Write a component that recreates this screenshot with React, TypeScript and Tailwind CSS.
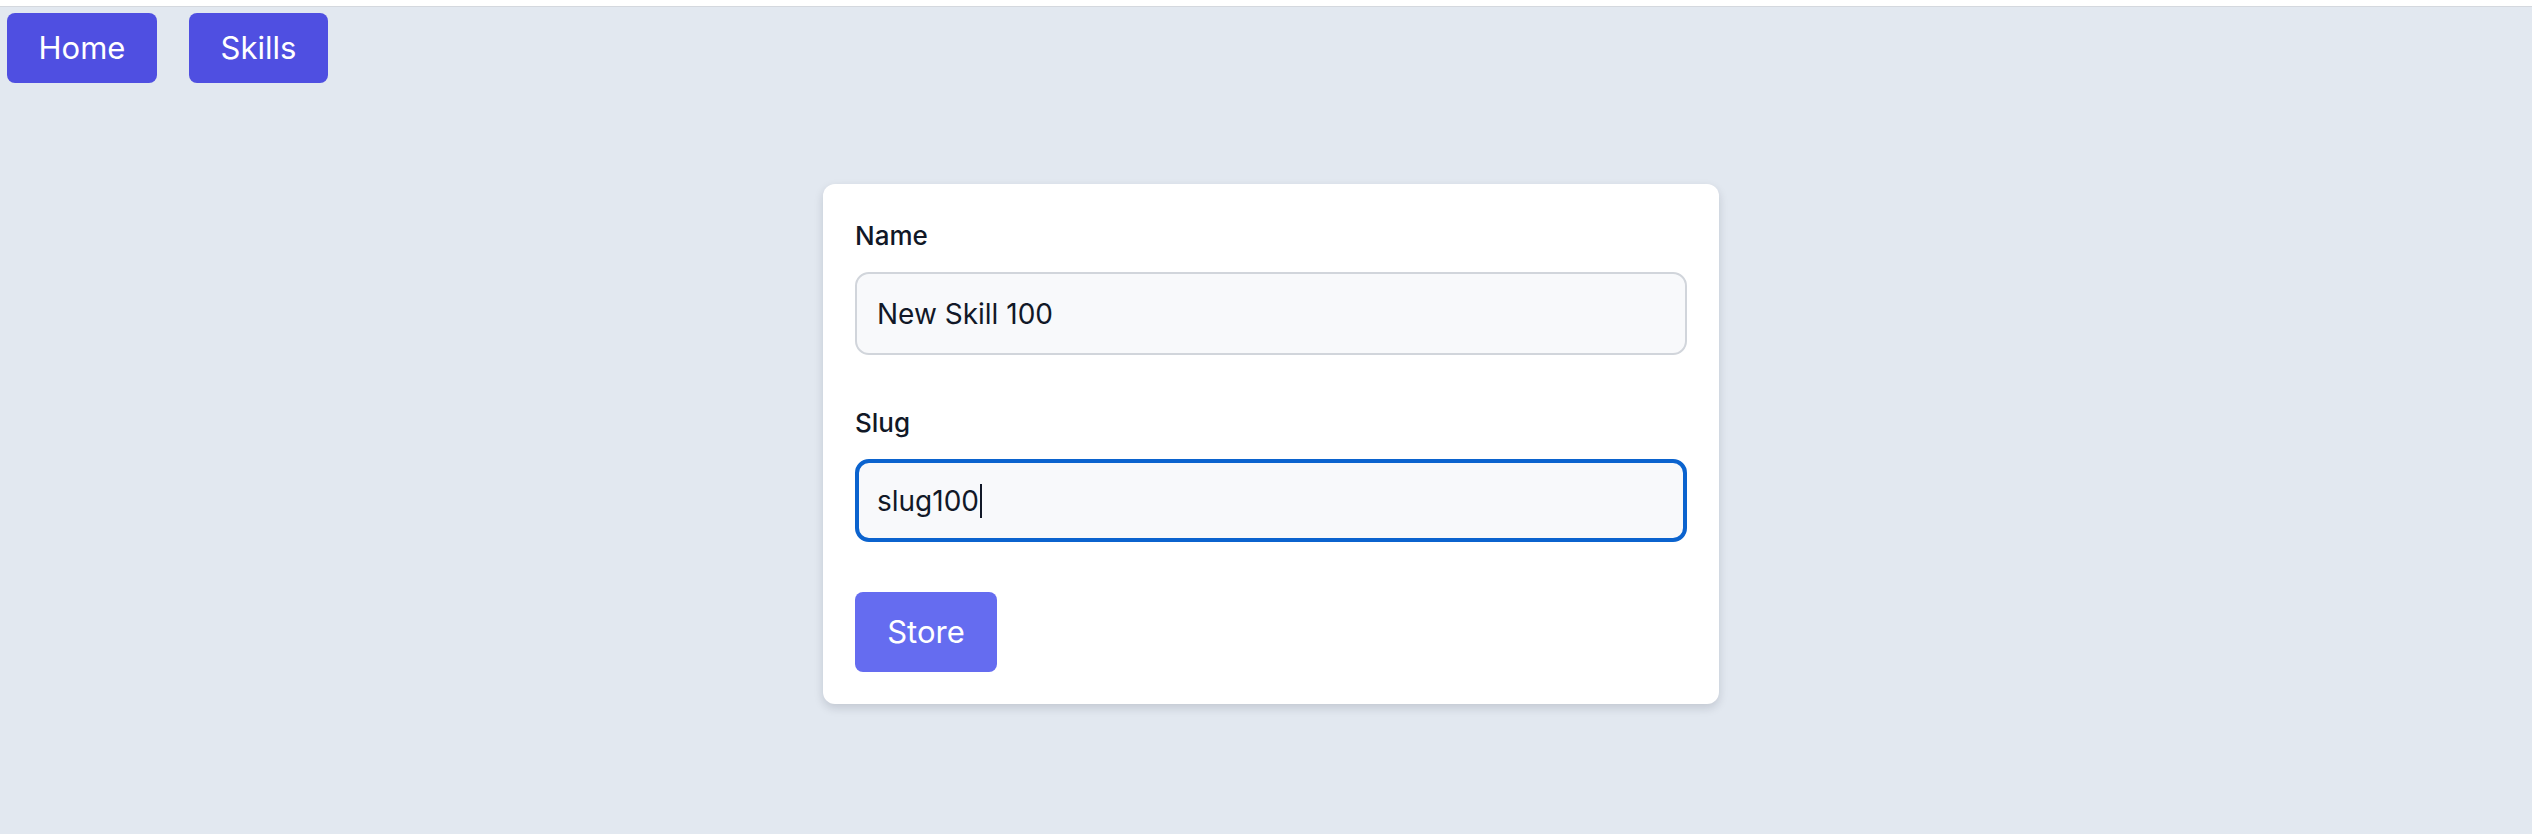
export default function App() {
  return (
    <div className="min-h-[834px] bg-[#e2e8f0] font-['Inter',sans-serif]">
      <div className="h-[7px] border-b border-[#d4d8de] bg-white" />
      <nav className="flex gap-[32px] pl-[7px] pt-[6px]">
        <a className="flex h-[70px] w-[150px] items-center justify-center rounded-[8px] bg-[#4f4fe1] text-[31px] text-white">
          Home
        </a>
        <a className="flex h-[70px] w-[139px] items-center justify-center rounded-[8px] bg-[#4f4fe1] text-[31px] text-white">
          Skills
        </a>
      </nav>

      <div className="flex justify-center pl-[10px] pt-[101px]">
        <form className="w-[896px] rounded-[12px] bg-white p-[32px] shadow-[0_4px_10px_rgba(15,23,42,0.15)]">
          <label className="block text-[26px] font-medium leading-[40px] text-[#111827]">Name</label>
          <input
            readOnly
            value="New Skill 100"
            className="mt-[16px] block h-[83px] w-full rounded-[14px] border-2 border-[#d1d5db] bg-[#f8f9fb] pl-[20px] text-[28px] text-[#111827] outline-none"
          />

          <label className="mt-[48px] block text-[26px] font-medium leading-[40px] text-[#111827]">Slug</label>
          <div className="mt-[16px] flex h-[83px] w-full items-center rounded-[14px] border-[4px] border-[#0b63ce] bg-[#f8f9fb] pl-[18px] text-[28px] text-[#111827]">
            <span>slug100</span>
            <span className="ml-[1px] inline-block h-[34px] w-[2px] bg-[#111827]" />
          </div>

          <button
            type="button"
            className="mt-[50px] flex h-[80px] w-[142px] items-center justify-center rounded-[8px] bg-[#656cf0] text-[31px] text-white"
          >
            Store
          </button>
        </form>
      </div>
    </div>
  )
}
